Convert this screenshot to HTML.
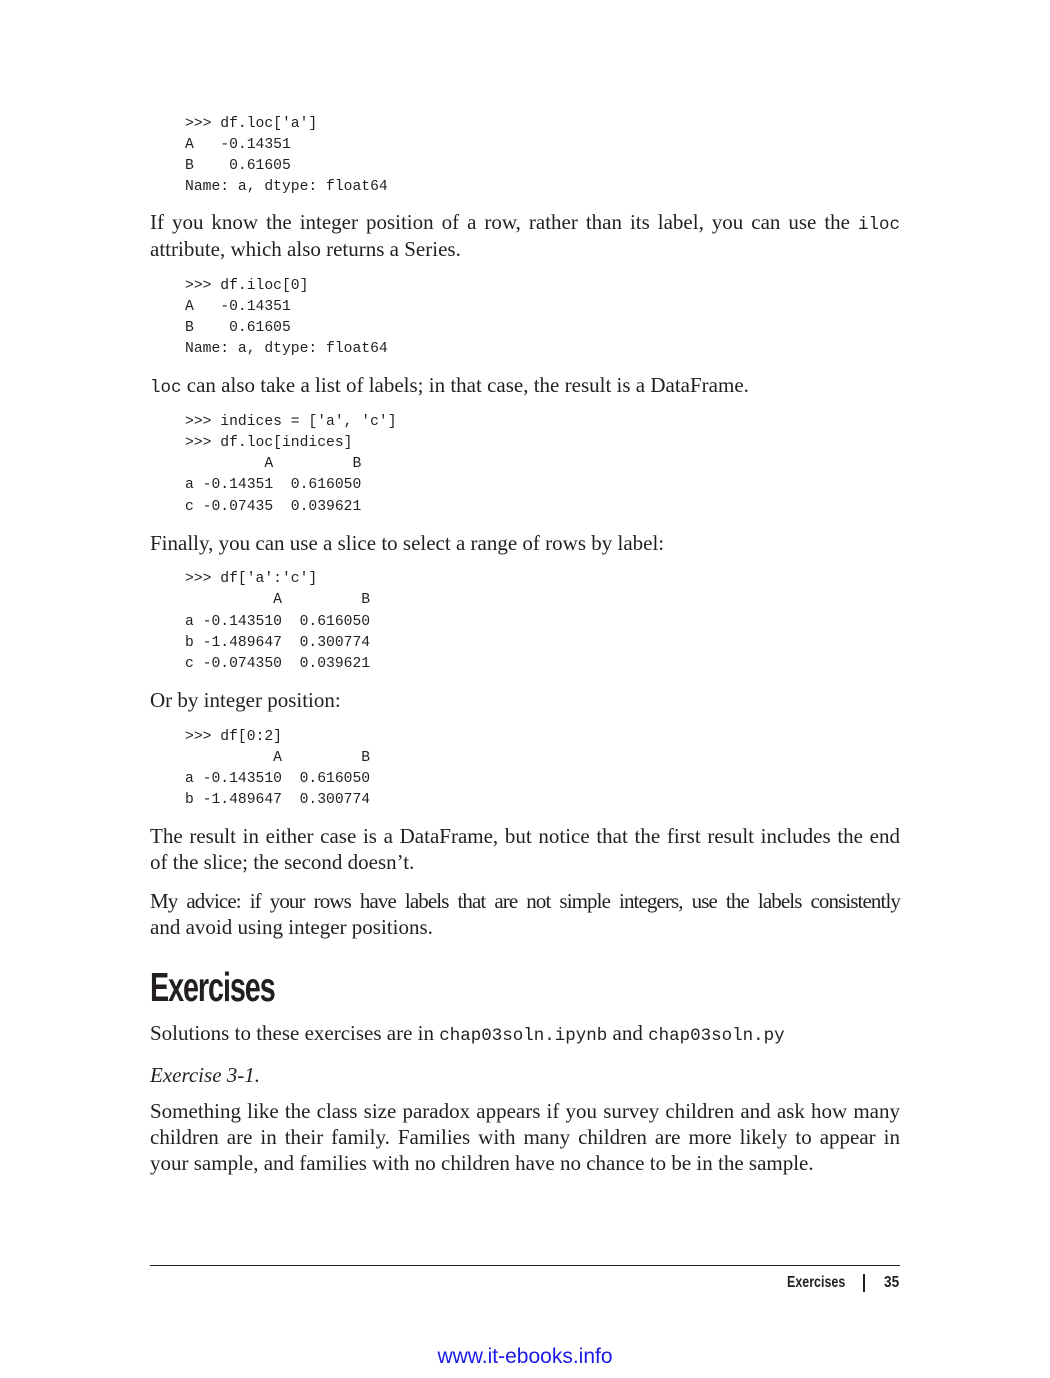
<!DOCTYPE html>
<html><head><meta charset="utf-8"><style>
html,body{margin:0;padding:0;background:#fff;}
body{width:1050px;height:1378px;position:relative;overflow:hidden;color:#231f20;}
.c{position:absolute;left:185px;font-family:"Liberation Mono",monospace;font-size:14.7px;line-height:20px;white-space:pre;}
.t{position:absolute;left:150px;width:750px;font-family:"Liberation Serif",serif;font-size:21px;line-height:26px;white-space:nowrap;}
.j{text-align:justify;text-align-last:justify;white-space:normal;height:26px;overflow:visible;}
.t code{font-family:"Liberation Mono",monospace;font-size:17.5px;}
h1{position:absolute;left:150px;top:960px;margin:0;font-family:"Liberation Sans Narrow","Liberation Sans",sans-serif;font-weight:bold;font-size:41px;line-height:54px;letter-spacing:-1.5px;transform:scaleX(0.7);transform-origin:left;}
</style></head><body>
<div class="c" style="top:114px">&gt;&gt;&gt; df.loc['a']</div>
<div class="c" style="top:135px">A   -0.14351</div>
<div class="c" style="top:156px">B    0.61605</div>
<div class="c" style="top:177px">Name: a, dtype: float64</div>

<div class="t j" style="top:209px">If you know the integer position of a row, rather than its label, you can use the <code>iloc</code></div>
<div class="t" style="top:236px">attribute, which also returns a Series.</div>

<div class="c" style="top:276px">&gt;&gt;&gt; df.iloc[0]</div>
<div class="c" style="top:297px">A   -0.14351</div>
<div class="c" style="top:318px">B    0.61605</div>
<div class="c" style="top:339px">Name: a, dtype: float64</div>

<div class="t" style="top:372px"><code>loc</code> can also take a list of labels; in that case, the result is a DataFrame.</div>

<div class="c" style="top:412px">&gt;&gt;&gt; indices = ['a', 'c']</div>
<div class="c" style="top:433px">&gt;&gt;&gt; df.loc[indices]</div>
<div class="c" style="top:454px">         A         B</div>
<div class="c" style="top:475px">a -0.14351  0.616050</div>
<div class="c" style="top:497px">c -0.07435  0.039621</div>

<div class="t" style="top:530px">Finally, you can use a slice to select a range of rows by label:</div>

<div class="c" style="top:569px">&gt;&gt;&gt; df['a':'c']</div>
<div class="c" style="top:590px">          A         B</div>
<div class="c" style="top:612px">a -0.143510  0.616050</div>
<div class="c" style="top:633px">b -1.489647  0.300774</div>
<div class="c" style="top:654px">c -0.074350  0.039621</div>

<div class="t" style="top:687px">Or by integer position:</div>

<div class="c" style="top:727px">&gt;&gt;&gt; df[0:2]</div>
<div class="c" style="top:748px">          A         B</div>
<div class="c" style="top:769px">a -0.143510  0.616050</div>
<div class="c" style="top:790px">b -1.489647  0.300774</div>

<div class="t j" style="top:823px">The result in either case is a DataFrame, but notice that the first result includes the end</div>
<div class="t" style="top:849px">of the slice; the second doesn’t.</div>

<div class="t j" style="top:888px;letter-spacing:-0.9px;word-spacing:-2px">My advice: if your rows have labels that are not simple integers, use the labels consistently</div>
<div class="t" style="top:914px">and avoid using integer positions.</div>

<h1>Exercises</h1>

<div class="t" style="top:1020px">Solutions to these exercises are in <code>chap03soln.ipynb</code> and <code>chap03soln.py</code></div>
<div class="t" style="top:1062px;font-style:italic">Exercise 3-1.</div>

<div class="t j" style="top:1098px">Something like the class size paradox appears if you survey children and ask how many</div>
<div class="t j" style="top:1124px">children are in their family. Families with many children are more likely to appear in</div>
<div class="t" style="top:1150px">your sample, and families with no children have no chance to be in the sample.</div>

<div style="position:absolute;left:150px;top:1265px;width:750px;height:1px;background:#231f20"></div>
<div style="position:absolute;left:787px;top:1273px;font-family:'Liberation Sans Narrow','Liberation Sans',sans-serif;font-weight:bold;font-size:16px;line-height:20px;transform:scaleX(0.78);transform-origin:left">Exercises</div>
<div style="position:absolute;left:863px;top:1274px;width:1.5px;height:18px;background:#231f20"></div>
<div style="position:absolute;left:884px;top:1273px;font-family:'Liberation Sans Narrow','Liberation Sans',sans-serif;font-weight:bold;font-size:16px;line-height:20px;transform:scaleX(0.85);transform-origin:left">35</div>

<div style="position:absolute;left:0;width:1050px;top:1346px;text-align:center;font-family:'Liberation Sans',sans-serif;font-size:21px;line-height:22px;color:#1a1ae6">www.it-ebooks.info</div>
</body></html>
